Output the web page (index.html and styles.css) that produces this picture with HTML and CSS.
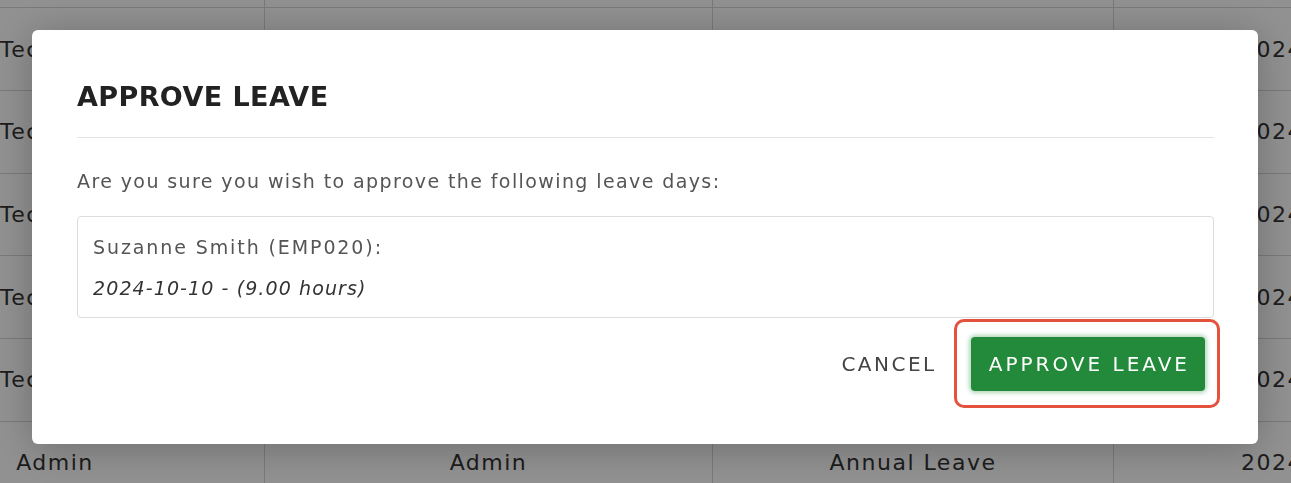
FILE: index.html
```html
<!DOCTYPE html>
<html lang="en">
<head>
    <meta charset="UTF-8">
    <meta name="viewport" content="width=device-width, initial-scale=1.0">
    <title>Approve Leave</title>
    <link rel="stylesheet" href="styles.css">
</head>
<body>
    <!-- leave requests table, behind the dialog -->
    <table class="leave-table">
        <tr><td></td><td></td><td></td><td></td></tr>
        <tr><td>Technician</td><td>Technician</td><td>Annual Leave</td><td>2024-10-08</td></tr>
        <tr><td>Technician</td><td>Technician</td><td>Annual Leave</td><td>2024-10-09</td></tr>
        <tr><td>Technician</td><td>Technician</td><td>Annual Leave</td><td>2024-10-10</td></tr>
        <tr><td>Technician</td><td>Technician</td><td>Annual Leave</td><td>2024-10-11</td></tr>
        <tr><td>Technician</td><td>Technician</td><td>Annual Leave</td><td>2024-10-14</td></tr>
        <tr><td>Admin</td><td>Admin</td><td>Annual Leave</td><td>2024-10-16</td></tr>
    </table>

    <!-- dialog -->
    <div class="overlay">
        <div class="modal">
            <h2 class="modal-title">APPROVE LEAVE</h2>
            <p class="modal-text">Are you sure you wish to approve the following leave days:</p>
            <div class="leave-box">
                <p class="leave-name">Suzanne Smith (EMP020):</p>
                <p class="leave-day">2024-10-10 - (9.00 hours)</p>
            </div>
            <div class="modal-actions">
                <button type="button" class="cancel-button">CANCEL</button>
                <div class="highlight">
                    <button type="button" class="approve-button">APPROVE LEAVE</button>
                </div>
            </div>
        </div>
    </div>
</body>
</html>
```

FILE: styles.css
```css
body {
    margin: 0;
    font-family: "DejaVu Sans", sans-serif;
    background-color: #fff;
    overflow: hidden;
}

/* table behind the dialog */
.leave-table {
    border-collapse: collapse;
    table-layout: fixed;
    width: 1413px;
    margin-top: -74.5px;
    font-size: 22px;
    letter-spacing: 1.5px;
    color: #333;
}

.leave-table td {
    height: 81.7px;
    border-bottom: 1px solid #d6d6d6;
    border-right: 1px solid #d6d6d6;
    text-align: center;
    padding: 0;
    white-space: nowrap;
}

.leave-table td:nth-child(1) {
    width: 110px;
    padding-right: 154px;
}

.leave-table td:nth-child(2) {
    width: 447px;
}

.leave-table td:nth-child(3) {
    width: 400px;
}

.leave-table td:nth-child(4) {
    width: 176px;
    text-align: left;
    padding-left: 127px;
}

/* dark layer + dialog */
.overlay {
    position: fixed;
    inset: 0;
    background: rgba(0, 0, 0, 0.43);
    padding: 30px 33px 0 32px;
}

.modal {
    background: #fff;
    border-radius: 6px;
    padding: 51px 44px 36px 45px;
    box-shadow: 0 4px 40px rgba(0, 0, 0, 0.25);
}

.modal-title {
    margin: 0;
    padding-bottom: 25px;
    border-bottom: 1px solid #e4e4e4;
    font-size: 27px;
    letter-spacing: 0.4px;
    font-weight: bold;
    color: #222;
}

.modal-text {
    margin: 32px 0 24px;
    font-size: 19px;
    letter-spacing: 1.4px;
    color: #555;
}

.leave-box {
    border: 1px solid #ddd;
    border-radius: 4px;
    padding: 19px 15px 18px;
}

.leave-name {
    margin: 0 0 19px;
    font-size: 19px;
    letter-spacing: 1.9px;
    color: #555;
}

.leave-day {
    margin: 0;
    font-size: 19px;
    letter-spacing: 1.1px;
    font-style: italic;
    color: #333;
}

.modal-actions {
    display: flex;
    justify-content: flex-end;
    align-items: center;
    gap: 17px;
    margin-right: -6px;
    margin-top: 1px;
}

.cancel-button {
    background: none;
    border: none;
    padding: 10px 0;
    font-family: inherit;
    font-size: 20px;
    letter-spacing: 2.5px;
    color: #444;
    cursor: pointer;
}

/* red outline round the main button */
.highlight {
    border: 3px solid #e2523c;
    border-radius: 10px;
    padding: 15px 12px 14px 14px;
}

.approve-button {
    display: block;
    background-color: #228a3a;
    border: none;
    border-radius: 4px;
    padding: 15px 15px 15px 18px;
    font-family: inherit;
    font-size: 20px;
    letter-spacing: 3px;
    color: #fff;
    box-shadow: 0 0 4px 2px rgba(34, 138, 58, 0.35);
    cursor: pointer;
}
```
